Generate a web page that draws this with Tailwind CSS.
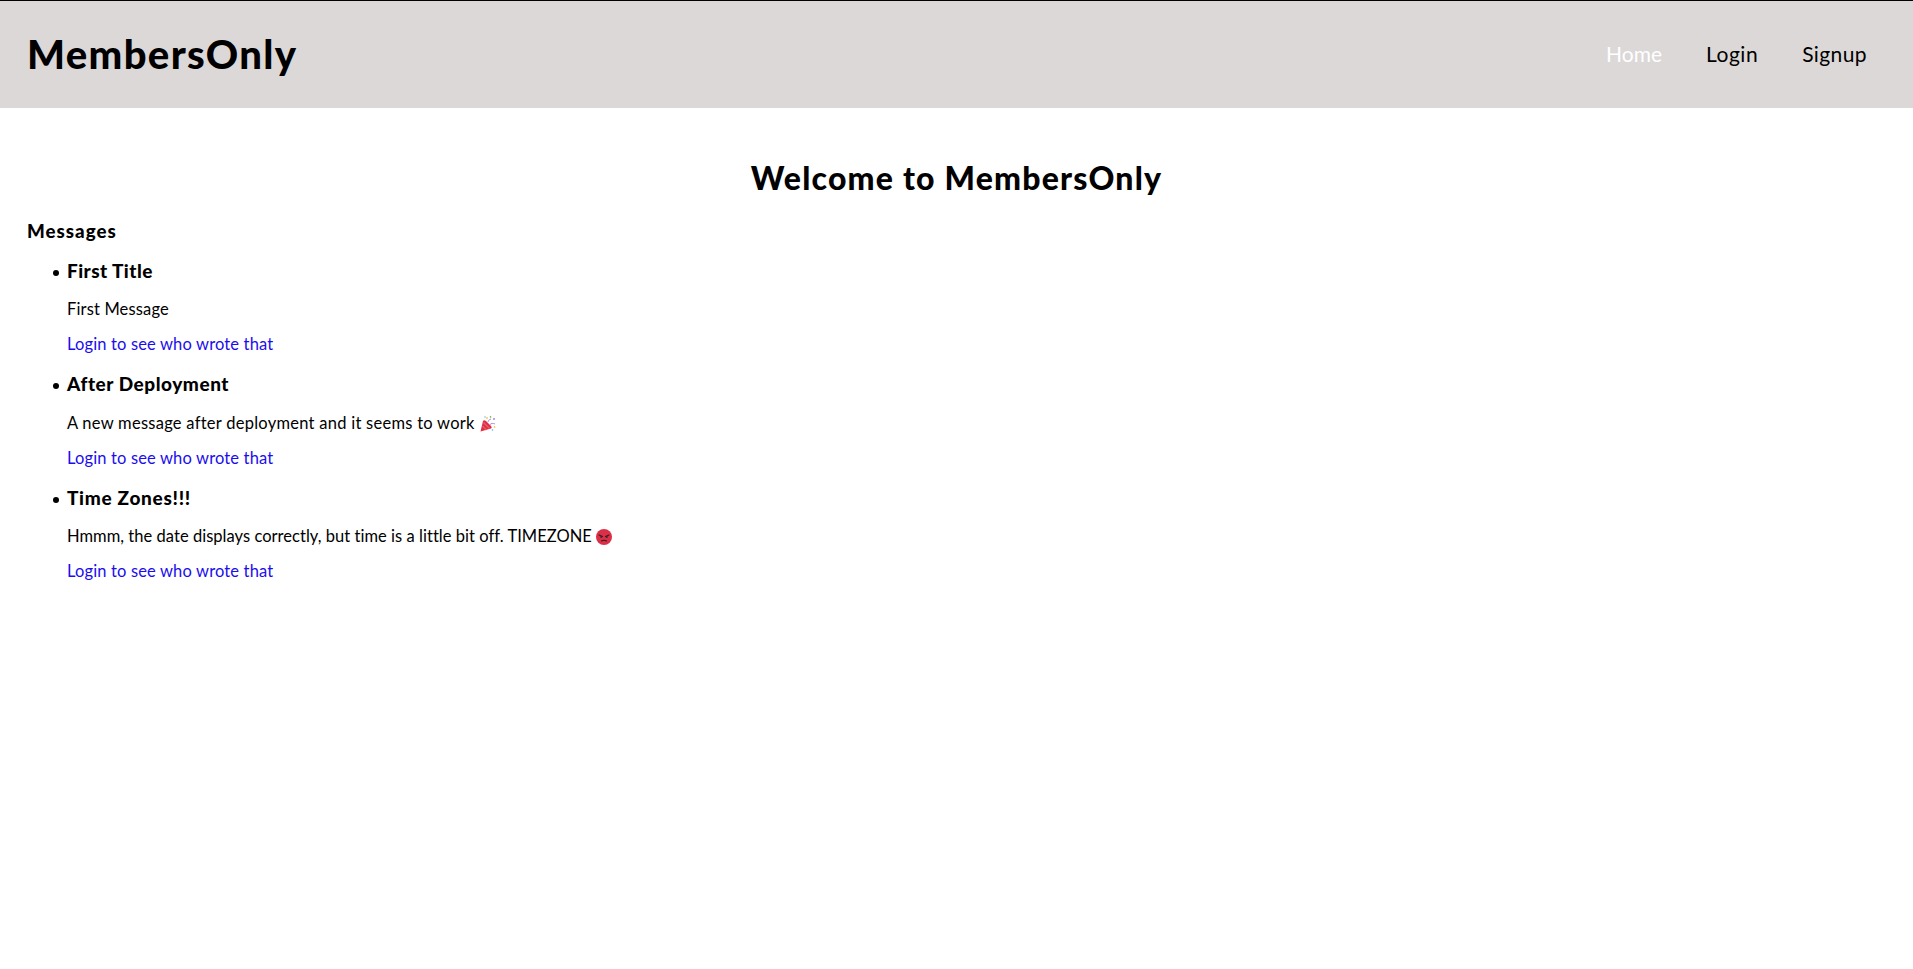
<!DOCTYPE html>
<html lang="en">
<head>
    <meta charset="UTF-8">
    <title>MembersOnly</title>
    <script src="https://cdn.jsdelivr.net/npm/@tailwindcss/browser@4"></script>
</head>
<body class="font-['Lato','Open_Sans',sans-serif] text-black bg-white">
    <header class="flex items-center justify-between h-[108px] bg-[#dcd8d8] pl-[27px] pr-[46px] border-t border-black">
        <h1 class="text-[40px] leading-[47px] font-black tracking-[1.35px]">MembersOnly</h1>
        <nav class="flex gap-[44px] text-[21px] leading-[30px] -mt-[1px]">
            <a class="text-white" href="#">Home</a>
            <a class="tracking-[0.5px]" href="#">Login</a>
            <a class="tracking-[0.4px]" href="#">Signup</a>
        </nav>
    </header>
    <main class="px-[27px]">
        <h2 class="text-[32px] leading-[38px] font-black text-center mt-[51px] tracking-[1.2px]">Welcome to MembersOnly</h2>
        <h3 class="text-[18.72px] leading-[22px] font-black mt-[23px] tracking-[1px]">Messages</h3>
        <ul class="pl-[26px] mt-[18px] flex flex-col gap-[19px] text-[16.5px] leading-[19px]">
            <li class="flex gap-[8px]">
                <span class="w-[6px] h-[6px] mt-[10px] rounded-full bg-black shrink-0"></span>
                <div>
                    <h4 class="text-[19px] leading-[22px] font-black tracking-[0.45px]">First Title</h4>
                    <p class="mt-[18px] tracking-[0.15px]">First Message</p>
                    <a class="block mt-[16px] text-[#1a0dee] tracking-[0.15px]" href="#">Login to see who wrote that</a>
                </div>
            </li>
            <li class="flex gap-[8px]">
                <span class="w-[6px] h-[6px] mt-[10px] rounded-full bg-black shrink-0"></span>
                <div>
                    <h4 class="text-[19px] leading-[22px] font-black tracking-[0.55px]">After Deployment</h4>
                    <p class="mt-[19px] tracking-[0.26px] flex items-center gap-[5px]">A new message after deployment and it seems to work
                        <svg class="w-[16px] h-[16px]" viewBox="0 0 16 16" role="img" aria-label="party popper">
                            <path d="M0.5 15.5 L3 5 Q4 3.5 6 5 L10.5 9.5 Q12.5 11.5 11 12.5 Z" fill="#dd2e44"/>
                            <path d="M2.5 10 L6.5 14 M3.5 6.5 L9.5 12.5" stroke="#ea596e" stroke-width="1.4"/>
                            <path d="M8 6 C8.5 4.5 9 3.5 11 3 M10 8.5 C11 7.5 13 7 15 8" stroke="#aa8dd8" stroke-width="1" fill="none"/>
                            <circle cx="7" cy="2" r="1" fill="#fdcb58"/>
                            <circle cx="10.5" cy="0.9" r="0.8" fill="#77b255"/>
                            <circle cx="14" cy="3" r="1" fill="#aa8dd8"/>
                            <circle cx="14.5" cy="11" r="0.9" fill="#fdcb58"/>
                            <circle cx="12.5" cy="14" r="0.8" fill="#55acee"/>
                            <circle cx="5" cy="1" r="0.7" fill="#55acee"/>
                        </svg>
                    </p>
                    <a class="block mt-[16px] text-[#1a0dee] tracking-[0.15px]" href="#">Login to see who wrote that</a>
                </div>
            </li>
            <li class="flex gap-[8px]">
                <span class="w-[6px] h-[6px] mt-[10px] rounded-full bg-black shrink-0"></span>
                <div>
                    <h4 class="text-[19px] leading-[22px] font-black tracking-[0.7px]">Time Zones!!!</h4>
                    <p class="mt-[18px] tracking-[0.035px] flex items-center gap-[4px]">Hmmm, the date displays correctly, but time is a little bit off. TIMEZONE
                        <svg class="w-[16px] h-[16px]" viewBox="0 0 16 16" role="img" aria-label="angry face">
                            <circle cx="8" cy="8" r="8" fill="#da2f47"/>
                            <path d="M3 6 L6.5 7.5 M13 6 L9.5 7.5" stroke="#3a1a20" stroke-width="1.1" stroke-linecap="round"/>
                            <circle cx="5.2" cy="8" r="1" fill="#292f33"/>
                            <circle cx="10.8" cy="8" r="1" fill="#292f33"/>
                            <path d="M5.5 12 Q8 10.5 10.5 12" stroke="#3a1a20" stroke-width="1.1" fill="none" stroke-linecap="round"/>
                        </svg>
                    </p>
                    <a class="block mt-[16px] text-[#1a0dee] tracking-[0.15px]" href="#">Login to see who wrote that</a>
                </div>
            </li>
        </ul>
    </main>
</body>
</html>
